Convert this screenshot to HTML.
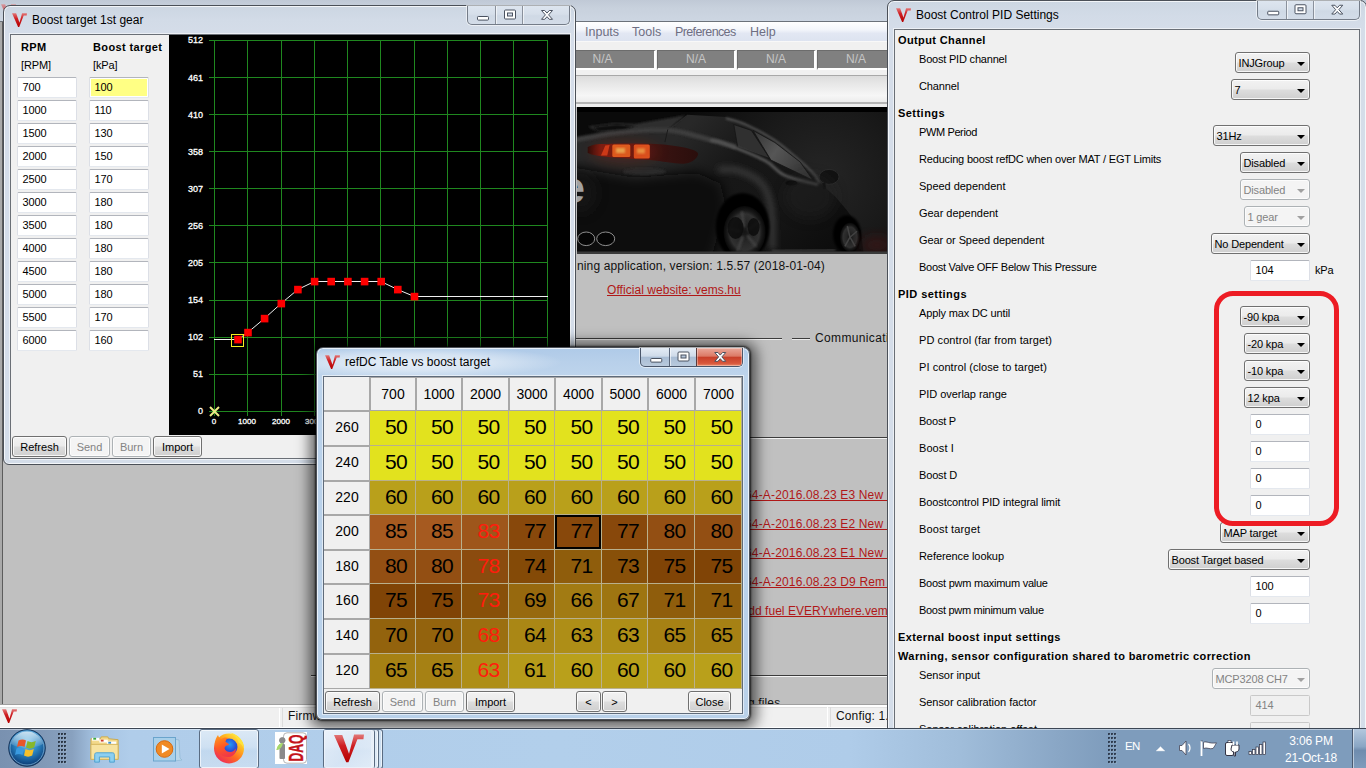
<!DOCTYPE html>
<html><head><meta charset="utf-8"><title>VemsTune</title>
<style>

*{box-sizing:border-box;margin:0;padding:0}
html,body{width:1366px;height:768px;overflow:hidden}
body{position:relative;background:#c0c0c0;font-family:"Liberation Sans",sans-serif;font-size:11px;color:#000;line-height:1}
.a{position:absolute}
.t{position:absolute;white-space:nowrap;line-height:14px;height:14px;letter-spacing:-.15px}
.b{font-weight:bold;letter-spacing:.38px}
/* windows */
.win{position:absolute;border:1px solid #4b5058;border-radius:7px 7px 6px 6px}
.win.in{background:linear-gradient(180deg,#ccd6e2 0px,#d2dbe7 14px,#d5dde9 30px,#d4dde9 100%);box-shadow:inset 0 0 0 1px rgba(255,255,255,.75)}
.win.act{background:linear-gradient(180deg,#afcae8 0px,#b8d0ea 14px,#bfd5ec 30px,#b9d1ea 60px,#b9d1ea 100%);box-shadow:inset 0 0 0 1px rgba(255,255,255,.7),0 0 2px 1px rgba(0,0,0,.7),0 2px 13px 7px rgba(0,0,0,.55)}
.client{position:absolute;background:#f0f0f0;border:1px solid #6a6f76;box-shadow:0 0 0 1px rgba(255,255,255,.55)}
.title{position:absolute;font-size:12px;line-height:16px;white-space:nowrap;color:#000}
.cap{position:absolute;border:1px solid #747c88;border-top:none;border-radius:0 0 5px 5px;box-shadow:0 0 0 1px rgba(255,255,255,.55);overflow:hidden}
.cap i{position:absolute;top:0;bottom:0;display:block}
/* buttons */
.btn{position:absolute;border:1px solid #707070;border-radius:3px;background:linear-gradient(180deg,#f2f2f2 0%,#ebebeb 48%,#dddddd 52%,#cfcfcf 100%);box-shadow:inset 0 0 0 1px rgba(255,255,255,.8);text-align:center;font-size:11px;white-space:nowrap}
.btn.dis{border-color:#adb2b5;background:#f4f4f4;color:#838383;box-shadow:inset 0 0 0 1px #fcfcfc}
.cmb{position:absolute;border:1px solid #707070;border-radius:3px;background:linear-gradient(180deg,#f2f2f2 0%,#ebebeb 48%,#dddddd 52%,#cfcfcf 100%);box-shadow:inset 0 0 0 1px rgba(255,255,255,.8);font-size:11px;white-space:nowrap;height:21px}
.cmb span{position:absolute;left:2.500px;top:3px;line-height:14px;letter-spacing:-.15px}
.cmb:after{content:"";position:absolute;right:4.500px;top:8.500px;border-left:4px solid transparent;border-right:4px solid transparent;border-top:4.500px solid #000;width:0;height:0}
.cmb.dis{border-color:#adb2b5;background:#f4f4f4;color:#838383;box-shadow:inset 0 0 0 1px #fcfcfc}
.cmb.dis:after{border-top-color:#a0a0a0}
.inp{position:absolute;background:#fff;border:1px solid #dcdfe6;border-top-color:#b2b5bc;border-bottom-color:#e4e8ee;border-radius:1.500px;font-size:11px;white-space:nowrap;letter-spacing:-.15px}
.inp span{position:absolute;left:4.500px;top:2px;line-height:14px}
.c{font-size:21px;letter-spacing:-.6px;text-align:center;padding-left:7px;white-space:nowrap}
.inp.dis{background:#f0f0f0;border-color:#c9c9c9;color:#838383}

</style></head>
<body>
<div id="main"><div class="a" style="left:0;top:0;width:1366px;height:22px;background:linear-gradient(180deg,#c0c9d6 0,#c8d1dd 8px,#cdd6e2 21px)"></div><svg class="a" style="left:1px;top:4px;opacity:.6" width="15" height="14" viewBox="0 0 16 15"><defs><linearGradient id="vg" x1="0" y1="0" x2="0" y2="1"><stop offset="0" stop-color="#e27878"/><stop offset=".4" stop-color="#cf2024"/><stop offset="1" stop-color="#b40000"/></linearGradient></defs><path d="M0,0.4 L4.400,0.400 L8,10.400 L10.700,0.150 L16,0.150 L15.700,2.700 L12.500,2.700 L7.700,15 L6.500,15 Z" fill="url(#vg)"/></svg><div class="a" style="left:0;top:21px;width:1366px;height:1px;background:#6c727a"></div><div class="a" style="left:0;top:22px;width:3px;height:706px;background:#a9a9a9;border-right:1px solid #5c5c5c"></div><div class="a" style="left:3px;top:22px;width:1363px;height:20px;background:linear-gradient(180deg,#ffffff 0,#f4f6fb 40%,#e2e7f3 60%,#dde3f0 100%);border-bottom:1px solid #f8f8f8"></div><div class="t" style="left:585px;top:24px;font-size:12.5px;letter-spacing:0px;line-height:16px;height:16px;color:#6e6e82">Inputs</div><div class="t" style="left:632px;top:24px;font-size:12.5px;letter-spacing:0px;line-height:16px;height:16px;color:#6e6e82">Tools</div><div class="t" style="left:675px;top:24px;font-size:12.5px;letter-spacing:-0.62px;line-height:16px;height:16px;color:#6e6e82">Preferences</div><div class="t" style="left:750px;top:24px;font-size:12.5px;letter-spacing:0px;line-height:16px;height:16px;color:#6e6e82">Help</div><div class="a" style="left:3px;top:42px;width:1363px;height:33px;background:#f0f0f0"></div><div class="a" style="left:550px;top:50px;width:106px;height:20px;background:#808080;border-right:2px solid #fff;border-bottom:2px solid #fff;border-top:1px solid #6c6c6c;border-left:1px solid #6c6c6c;color:#c6c6c6;font-size:12px;line-height:17px;text-align:center">N/A</div><div class="a" style="left:657px;top:50px;width:79px;height:20px;background:#808080;border-right:2px solid #fff;border-bottom:2px solid #fff;border-top:1px solid #6c6c6c;border-left:1px solid #6c6c6c;color:#c6c6c6;font-size:12px;line-height:17px;text-align:center">N/A</div><div class="a" style="left:737px;top:50px;width:79px;height:20px;background:#808080;border-right:2px solid #fff;border-bottom:2px solid #fff;border-top:1px solid #6c6c6c;border-left:1px solid #6c6c6c;color:#c6c6c6;font-size:12px;line-height:17px;text-align:center">N/A</div><div class="a" style="left:817px;top:50px;width:79px;height:20px;background:#808080;border-right:2px solid #fff;border-bottom:2px solid #fff;border-top:1px solid #6c6c6c;border-left:1px solid #6c6c6c;color:#c6c6c6;font-size:12px;line-height:17px;text-align:center">N/A</div><div class="a" style="left:3px;top:75px;width:1363px;height:1px;background:#a8a8a8"></div><div class="a" style="left:3px;top:76px;width:1363px;height:26px;background:linear-gradient(180deg,#dcdcdc 0,#e9e9e9 35%,#f6f6f6 75%,#ececec 100%)"></div><div class="a" style="left:3px;top:102px;width:1363px;height:2px;background:#b4b4b4"></div><div class="a" style="left:3px;top:104px;width:1363px;height:3px;background:#ededed"></div><svg class="a" style="left:577px;top:107px" width="310" height="147" viewBox="0 0 310 147"><defs>
<radialGradient id="cbg" gradientUnits="userSpaceOnUse" cx="245" cy="70" r="150"><stop offset="0" stop-color="#252525"/><stop offset="0.45" stop-color="#1a1a1a"/><stop offset="1" stop-color="#0a0a0a"/></radialGradient>
<linearGradient id="cbody" gradientUnits="userSpaceOnUse" x1="120" y1="10" x2="260" y2="146"><stop offset="0" stop-color="#282828"/><stop offset="0.3" stop-color="#171717"/><stop offset="0.6" stop-color="#161616"/><stop offset="1" stop-color="#0c0c0c"/></linearGradient>
<linearGradient id="cwin" gradientUnits="userSpaceOnUse" x1="170" y1="20" x2="225" y2="60"><stop offset="0" stop-color="#2c2c2c"/><stop offset="0.55" stop-color="#565656"/><stop offset="1" stop-color="#3a3a3a"/></linearGradient>
<linearGradient id="ctl" x1="0" y1="0" x2="1" y2="0"><stop offset="0" stop-color="#2a0c0a"/><stop offset="0.12" stop-color="#7a1c10"/><stop offset="0.5" stop-color="#5a1610"/><stop offset="0.58" stop-color="#3c1412"/><stop offset="1" stop-color="#2a0e0c"/></linearGradient>
<radialGradient id="cwh" cx="0.5" cy="0.5" r="0.5"><stop offset="0" stop-color="#141414"/><stop offset="0.35" stop-color="#262626"/><stop offset="0.7" stop-color="#303030"/><stop offset="0.82" stop-color="#1a1a1a"/><stop offset="1" stop-color="#080808"/></radialGradient>
<filter id="b1" x="-20%" y="-20%" width="140%" height="140%"><feGaussianBlur stdDeviation="1.2"/></filter>
<filter id="b2" x="-30%" y="-30%" width="160%" height="160%"><feGaussianBlur stdDeviation="3"/></filter>
<filter id="b3" x="-50%" y="-50%" width="200%" height="200%"><feGaussianBlur stdDeviation="6"/></filter>
</defs><rect width="310" height="147" fill="url(#cbg)"/><path d="M-1.0,33.2 L38.1,25.3 L90.8,22.4 L110.3,7.8 L149.0,10.1 L168.5,16.6 L197.8,33.2 L223.2,53.7 L236.9,66.4 L242.8,76.1 L258.4,89.8 L270.1,103.5 L283.8,123.0 L286.7,146.4 L0,147 Z" fill="url(#cbody)"/><path d="M10.7,19.5 L38.1,16.0 L57.6,17.1 L108.4,8.2 L92.8,21.4 L57.6,23.4 L22.4,25.3 Z" fill="#2d2d2d" filter="url(#b1)"/><path d="M16.6,19.9 L40.0,17.5 L57.6,19.5 L47.8,23.0 L20.5,24.4 Z" fill="#0c0c0c" filter="url(#b1)"/><path d="M-1.0,32.8 C5.5,31.6 23.1,27.6 38.1,25.9 C53.0,24.3 75.2,22.4 88.8,23.0 C102.5,23.6 108.4,26.4 120.1,29.2 C131.8,32.1 152.5,38.2 159.0,40.0" fill="none" stroke="#3c3c3c" stroke-width="5" filter="url(#b1)"/><path d="M90.8,22.4 L87.9,35.1" fill="none" stroke="#1a1a1a" stroke-width="1"/><path d="M-12.7,58.5 L57.6,70.3 L120.1,65.4 L143.5,76.1 L149.4,99.6 L133.8,154.2 L-12.7,154.2 Z" fill="#070707" filter="url(#b3)"/><ellipse cx="67.4" cy="64.4" rx="22" ry="3.500" fill="#2c2c2c" filter="url(#b1)"/><path d="M10.7,40.0 C13.0,39.5 14.0,37.6 24.4,37.1 C34.8,36.5 59.9,36.2 73.2,36.7 C86.6,37.2 96.5,38.4 104.5,40.0 C112.4,41.6 120.4,43.7 121.1,46.4 C121.7,49.2 116.4,55.5 108.4,56.6 C100.4,57.7 87.2,54.3 73.2,53.1 C59.2,51.8 34.8,50.4 24.4,49.2 C14.0,48.0 13.0,46.4 10.7,45.9 Z" fill="url(#ctl)"/><path d="M28.3,38.4 L32.6,38.0 L30.2,48.4 L24.0,48.4 Z" fill="#d8401a"/><rect x="35.3" y="37.5" width="18" height="12.500" rx="1.500" fill="#ee6a22"/><rect x="56.8" y="37.5" width="16" height="14" rx="1.500" fill="#e85a20"/><rect x="39.0" y="41.0" width="9" height="5" fill="#ffc860" filter="url(#b1)"/><rect x="59.9" y="41.4" width="8" height="5" fill="#ffb050" filter="url(#b1)"/><ellipse cx="47.8" cy="44.9" rx="34" ry="11" fill="#a02010" opacity=".25" filter="url(#b3)"/><ellipse cx="4" cy="86" rx="16" ry="20" fill="#1a1a1a" opacity=".5" filter="url(#b3)"/><text x="-17" y="96" font-family="Liberation Sans,sans-serif" font-weight="bold" font-size="45" fill="#a2a2a2">e</text><ellipse cx="9.2" cy="131.8" rx="8.500" ry="6.800" fill="#050505" stroke="#8e8e8e" stroke-width="1"/><ellipse cx="28.7" cy="131.8" rx="9" ry="6.800" fill="#050505" stroke="#8e8e8e" stroke-width="1"/><path d="M149.0,11.3 C152.3,12.3 160.4,13.8 168.5,17.5 C176.7,21.2 188.7,27.4 197.8,33.5 C206.9,39.7 216.7,48.6 223.2,54.2 C229.7,59.9 233.7,63.7 236.9,67.3 C240.1,71.0 241.4,74.7 242.4,76.1" fill="none" stroke="#505050" stroke-width="2.400" filter="url(#b1)"/><path d="M156.8,17.5 L174.4,23.4 L192.9,51.7 L160.7,40.0 Z" fill="#303030" stroke="#151515" stroke-width=".8"/><path d="M176.0,23.4 L197.8,35.5 L223.2,55.0 L235.9,73.2 L193.9,53.1 Z" fill="url(#cwin)" stroke="#151515" stroke-width=".8"/><path d="M133.4,33.2 C136.0,33.8 139.9,33.6 149.0,37.1 C158.1,40.5 178.3,48.5 188.1,53.7 C197.8,58.9 198.8,64.3 207.6,68.3 C216.4,72.3 235.3,76.1 240.8,77.7" fill="none" stroke="#525252" stroke-width="3" filter="url(#b1)"/><ellipse cx="252.1" cy="69.9" rx="10" ry="7.500" fill="#121212" stroke="#2c2c2c" stroke-width="1"/><path d="M246.7,76.1 L247.6,82.0" stroke="#0c0c0c" stroke-width="3"/><ellipse cx="214.4" cy="76.1" rx="6" ry="2.500" fill="#0a0a0a"/><ellipse cx="233.0" cy="89.8" rx="26" ry="22" fill="#222222" opacity=".5" filter="url(#b3)"/><path d="M141.2,62.5 C144.4,62.6 153.6,61.2 160.7,63.4 C167.9,65.7 178.6,70.1 184.2,76.1 C189.7,82.1 192.0,88.5 193.9,99.6 C195.9,110.6 195.5,135.4 195.9,142.5" fill="none" stroke="#404040" stroke-width="5" filter="url(#b2)"/><ellipse cx="165.6" cy="120.0" rx="27" ry="34" fill="#050505" filter="url(#b1)"/><ellipse cx="167.6" cy="125.0" rx="21" ry="26" fill="url(#cwh)"/><g stroke="#424242" stroke-width="2.500" filter="url(#b1)"><line x1="166.9" y1="120.1" x2="164.8" y2="104.3"/><line x1="171.1" y1="122.7" x2="181.7" y2="115.1"/><line x1="170.4" y1="128.5" x2="179.1" y2="139.6"/><line x1="165.8" y1="129.5" x2="160.5" y2="143.9"/><line x1="163.6" y1="124.3" x2="151.7" y2="122.1"/></g><ellipse cx="158.6" cy="121.0" rx="8" ry="11" fill="#0c0c0c" opacity=".85"/><ellipse cx="176.6" cy="120.0" rx="6" ry="9" fill="#0c0c0c" opacity=".85"/><ellipse cx="270.0" cy="127.2" rx="14" ry="19" fill="#060606" filter="url(#b1)"/><ellipse cx="273.0" cy="130.2" rx="10" ry="14.500" fill="url(#cwh)"/><g stroke="#444" stroke-width="1.500"><line x1="273.0" y1="130.2" x2="270.3" y2="119.0"/><line x1="273.0" y1="130.2" x2="280.0" y2="124.2"/><line x1="273.0" y1="130.2" x2="278.2" y2="139.4"/><line x1="273.0" y1="130.2" x2="267.9" y2="139.4"/></g><ellipse cx="300" cy="138" rx="16" ry="9" fill="#4a1616" opacity=".55" filter="url(#b3)"/><path d="M194.9,144.1 L258.4,142.9" stroke="#3e3e3e" stroke-width="2" filter="url(#b1)"/><rect width="310" height="5" fill="#000"/><rect y="144.500" width="310" height="2.500" fill="#3a3a3a"/></svg><div class="t" style="left:577px;top:258px;font-size:12px;letter-spacing:.14px;line-height:16px;height:16px;color:#111">ning application, version: 1.5.57 (2018-01-04)</div><div class="t" style="left:607px;top:282px;font-size:12px;letter-spacing:.05px;line-height:16px;height:16px;color:#b01818;text-decoration:underline">Official website: vems.hu</div><div class="a" style="left:560px;top:338px;width:222px;height:1px;background:#3c3c3c"></div><div class="a" style="left:560px;top:339px;width:222px;height:1px;background:#ececec"></div><div class="a" style="left:792px;top:338px;width:18px;height:1px;background:#3c3c3c"></div><div class="a" style="left:792px;top:339px;width:18px;height:1px;background:#ececec"></div><div class="t" style="left:815px;top:330px;font-size:12px;letter-spacing:.36px;line-height:16px;height:16px;color:#111">Communication</div><div class="a" style="left:311px;top:437px;width:580px;height:1px;background:#3c3c3c"></div><div class="a" style="left:311px;top:438px;width:580px;height:1px;background:#f4f4f4"></div><div class="t" style="left:745px;top:487px;font-size:12px;letter-spacing:0.16px;line-height:16px;height:16px;color:#b01818;text-decoration:underline">64-A-2016.08.23 E3 New&nbsp;&nbsp;&nbsp;&nbsp;</div><div class="t" style="left:745px;top:516px;font-size:12px;letter-spacing:0.16px;line-height:16px;height:16px;color:#b01818;text-decoration:underline">64-A-2016.08.23 E2 New&nbsp;&nbsp;&nbsp;&nbsp;</div><div class="t" style="left:745px;top:545px;font-size:12px;letter-spacing:0.16px;line-height:16px;height:16px;color:#b01818;text-decoration:underline">64-A-2016.08.23 E1 New&nbsp;&nbsp;&nbsp;&nbsp;</div><div class="t" style="left:745px;top:574px;font-size:12px;letter-spacing:0.16px;line-height:16px;height:16px;color:#b01818;text-decoration:underline">64-A-2016.08.23 D9 Rem&nbsp;&nbsp;</div><div class="t" style="left:748.2px;top:603px;font-size:12px;letter-spacing:0.05px;line-height:16px;height:16px;color:#b01818;text-decoration:underline">dd fuel EVERYwhere.vem&nbsp;&nbsp;</div><div class="a" style="left:311px;top:675px;width:580px;height:1px;background:#3c3c3c"></div><div class="a" style="left:311px;top:676px;width:580px;height:1px;background:#f4f4f4"></div><div class="t" style="left:748px;top:695px;font-size:12px;letter-spacing:.14px;line-height:16px;height:16px;color:#111">g files</div><div class="a" style="left:0;top:704px;width:1366px;height:1px;background:#a0a0a0"></div><div class="a" style="left:0;top:705px;width:1366px;height:23px;background:#f0f0f0;border-top:2px solid #fff;border-bottom:1px solid #fff"></div><svg class="a" style="left:2px;top:709px;" width="15" height="14" viewBox="0 0 16 15"><defs><linearGradient id="vg" x1="0" y1="0" x2="0" y2="1"><stop offset="0" stop-color="#e27878"/><stop offset=".4" stop-color="#cf2024"/><stop offset="1" stop-color="#b40000"/></linearGradient></defs><path d="M0,0.4 L4.400,0.400 L8,10.400 L10.700,0.150 L16,0.150 L15.700,2.700 L12.500,2.700 L7.700,15 L6.500,15 Z" fill="url(#vg)"/></svg><div class="a" style="left:279px;top:707px;width:1px;height:20px;background:#fff"></div><div class="a" style="left:282px;top:707px;width:1px;height:20px;background:#dcdcdc"></div><div class="a" style="left:0;top:707px;width:1366px;height:1px;background:#e2e2e2"></div><div class="t" style="left:288px;top:708px;font-size:12px;letter-spacing:.14px;line-height:16px;height:16px;color:#111">Firmware</div><div class="a" style="left:827px;top:707px;width:1px;height:20px;background:#fff"></div><div class="a" style="left:830px;top:707px;width:1px;height:20px;background:#dcdcdc"></div><div class="t" style="left:836px;top:708px;font-size:12px;letter-spacing:.14px;line-height:16px;height:16px;color:#111">Config: 1.</div></div><div id="boost"><div class="win in" style="left:3px;top:5px;width:573px;height:460px"></div><svg class="a" style="left:12px;top:13px;" width="15" height="14" viewBox="0 0 16 15"><defs><linearGradient id="vg" x1="0" y1="0" x2="0" y2="1"><stop offset="0" stop-color="#e27878"/><stop offset=".4" stop-color="#cf2024"/><stop offset="1" stop-color="#b40000"/></linearGradient></defs><path d="M0,0.4 L4.400,0.400 L8,10.400 L10.700,0.150 L16,0.150 L15.700,2.700 L12.500,2.700 L7.700,15 L6.500,15 Z" fill="url(#vg)"/></svg><div class="title" style="left:32px;top:12px">Boost target 1st gear</div><div class="cap" style="left:467px;top:6px;width:103px;height:19px;background:linear-gradient(180deg,#dde5ef 0,#d6dfea 45%,#cfd9e5 55%,#d3dce8 100%)"><i style="left:27px;width:1px;background:#8a919c;box-shadow:1px 0 0 rgba(255,255,255,.6)"></i><i style="left:54px;width:1px;background:#8a919c;box-shadow:1px 0 0 rgba(255,255,255,.6)"></i><svg class="a" style="left:0;top:0" width="103" height="19"><rect x="9.5" y="10.5" width="11" height="3.600" rx=".8" fill="#fff" stroke="#4a5260" stroke-width="1"/><rect x="36.5" y="4" width="11" height="9" rx="1" fill="#fff" stroke="#4a5260" stroke-width="1"/><rect x="39.5" y="7" width="5" height="3" fill="#d3dce8" stroke="#4a5260" stroke-width="1"/><path d="M73.5,4.5 l3.200,0 l2.300,2.600 l2.300,-2.600 l3.200,0 l-3.900,4.400 l3.900,4.400 l-3.200,0 l-2.300,-2.600 l-2.300,2.600 l-3.200,0 l3.900,-4.400 Z" fill="#fff" stroke="#4a5260" stroke-width="1" stroke-linejoin="round"/></svg></div><div class="client" style="left:10px;top:34px;width:560px;height:425px"></div><div class="t b" style="left:21px;top:40px">RPM</div><div class="t b" style="left:93px;top:40px">Boost target</div><div class="t" style="left:21px;top:58px">[RPM]</div><div class="t" style="left:93px;top:58px">[kPa]</div><div class="inp" style="left:17px;top:77px;width:60px;height:21px"><span>700</span></div><div class="inp" style="left:89px;top:77px;width:60px;height:21px;background:#ffff84;box-shadow:inset 0 0 0 1px #fff"><span>100</span></div><div class="inp" style="left:17px;top:100px;width:60px;height:21px"><span>1000</span></div><div class="inp" style="left:89px;top:100px;width:60px;height:21px"><span>110</span></div><div class="inp" style="left:17px;top:123px;width:60px;height:21px"><span>1500</span></div><div class="inp" style="left:89px;top:123px;width:60px;height:21px"><span>130</span></div><div class="inp" style="left:17px;top:146px;width:60px;height:21px"><span>2000</span></div><div class="inp" style="left:89px;top:146px;width:60px;height:21px"><span>150</span></div><div class="inp" style="left:17px;top:169px;width:60px;height:21px"><span>2500</span></div><div class="inp" style="left:89px;top:169px;width:60px;height:21px"><span>170</span></div><div class="inp" style="left:17px;top:192px;width:60px;height:21px"><span>3000</span></div><div class="inp" style="left:89px;top:192px;width:60px;height:21px"><span>180</span></div><div class="inp" style="left:17px;top:215px;width:60px;height:21px"><span>3500</span></div><div class="inp" style="left:89px;top:215px;width:60px;height:21px"><span>180</span></div><div class="inp" style="left:17px;top:238px;width:60px;height:21px"><span>4000</span></div><div class="inp" style="left:89px;top:238px;width:60px;height:21px"><span>180</span></div><div class="inp" style="left:17px;top:261px;width:60px;height:21px"><span>4500</span></div><div class="inp" style="left:89px;top:261px;width:60px;height:21px"><span>180</span></div><div class="inp" style="left:17px;top:284px;width:60px;height:21px"><span>5000</span></div><div class="inp" style="left:89px;top:284px;width:60px;height:21px"><span>180</span></div><div class="inp" style="left:17px;top:307px;width:60px;height:21px"><span>5500</span></div><div class="inp" style="left:89px;top:307px;width:60px;height:21px"><span>170</span></div><div class="inp" style="left:17px;top:330px;width:60px;height:21px"><span>6000</span></div><div class="inp" style="left:89px;top:330px;width:60px;height:21px"><span>160</span></div><svg class="a" style="left:169px;top:35px" width="401" height="400" viewBox="169 35 401 400" shape-rendering="crispEdges"><rect x="169" y="35" width="401" height="400" fill="#000"/><path d="M214.5,40 V416 M247.5,40 V416 M281.5,40 V416 M314.5,40 V416 M347.5,40 V416 M380.5,40 V416 M414.5,40 V416 M447.5,40 V416 M480.5,40 V416 M513.5,40 V416 M547.5,40 V416 M209,411.5 H548 M209,374.5 H548 M209,337.5 H548 M209,300.5 H548 M209,262.5 H548 M209,225.5 H548 M209,188.5 H548 M209,151.5 H548 M209,114.5 H548 M209,77.5 H548 M209,40.5 H548 " stroke="#1f871f" stroke-width="1" fill="none"/><polyline shape-rendering="auto" points="214.0,339.5 237.8,339.5 247.8,332.5 264.4,318.5 281.1,303.5 297.8,289.5 314.4,281.5 331.0,281.5 347.7,281.5 364.4,281.5 381.0,281.5 397.6,289.5 414.3,296.5 548.0,296.5" fill="none" stroke="#f0f0f0" stroke-width="1"/><rect shape-rendering="auto" x="234.2" y="335.8" width="7.600" height="7.600" fill="#ff0000"/><rect shape-rendering="auto" x="244.2" y="328.8" width="7.600" height="7.600" fill="#ff0000"/><rect shape-rendering="auto" x="260.8" y="314.8" width="7.600" height="7.600" fill="#ff0000"/><rect shape-rendering="auto" x="277.5" y="299.8" width="7.600" height="7.600" fill="#ff0000"/><rect shape-rendering="auto" x="294.1" y="285.8" width="7.600" height="7.600" fill="#ff0000"/><rect shape-rendering="auto" x="310.8" y="277.8" width="7.600" height="7.600" fill="#ff0000"/><rect shape-rendering="auto" x="327.4" y="277.8" width="7.600" height="7.600" fill="#ff0000"/><rect shape-rendering="auto" x="344.1" y="277.8" width="7.600" height="7.600" fill="#ff0000"/><rect shape-rendering="auto" x="360.8" y="277.8" width="7.600" height="7.600" fill="#ff0000"/><rect shape-rendering="auto" x="377.4" y="277.8" width="7.600" height="7.600" fill="#ff0000"/><rect shape-rendering="auto" x="394.0" y="285.8" width="7.600" height="7.600" fill="#ff0000"/><rect shape-rendering="auto" x="410.7" y="292.8" width="7.600" height="7.600" fill="#ff0000"/><rect x="231.5" y="334.5" width="12" height="12" fill="none" stroke="#f4f020" stroke-width="1"/><path shape-rendering="auto" d="M210,407 l9,9 m0,-9 l-9,9" stroke="#ecec84" stroke-width="2"/></svg><div class="t" style="left:170px;width:33px;text-align:right;top:33px;color:#fff;font-size:9px;letter-spacing:0;-webkit-text-stroke:.3px #fff">512</div><div class="t" style="left:170px;width:33px;text-align:right;top:71px;color:#fff;font-size:9px;letter-spacing:0;-webkit-text-stroke:.3px #fff">461</div><div class="t" style="left:170px;width:33px;text-align:right;top:108px;color:#fff;font-size:9px;letter-spacing:0;-webkit-text-stroke:.3px #fff">410</div><div class="t" style="left:170px;width:33px;text-align:right;top:145px;color:#fff;font-size:9px;letter-spacing:0;-webkit-text-stroke:.3px #fff">358</div><div class="t" style="left:170px;width:33px;text-align:right;top:182px;color:#fff;font-size:9px;letter-spacing:0;-webkit-text-stroke:.3px #fff">307</div><div class="t" style="left:170px;width:33px;text-align:right;top:219px;color:#fff;font-size:9px;letter-spacing:0;-webkit-text-stroke:.3px #fff">256</div><div class="t" style="left:170px;width:33px;text-align:right;top:256px;color:#fff;font-size:9px;letter-spacing:0;-webkit-text-stroke:.3px #fff">205</div><div class="t" style="left:170px;width:33px;text-align:right;top:293px;color:#fff;font-size:9px;letter-spacing:0;-webkit-text-stroke:.3px #fff">154</div><div class="t" style="left:170px;width:33px;text-align:right;top:330px;color:#fff;font-size:9px;letter-spacing:0;-webkit-text-stroke:.3px #fff">102</div><div class="t" style="left:170px;width:33px;text-align:right;top:367px;color:#fff;font-size:9px;letter-spacing:0;-webkit-text-stroke:.3px #fff">51</div><div class="t" style="left:170px;width:33px;text-align:right;top:404px;color:#fff;font-size:9px;letter-spacing:0;-webkit-text-stroke:.3px #fff">0</div><div class="t" style="left:194px;width:40px;text-align:center;top:415px;color:#fff;font-size:8px;letter-spacing:0;-webkit-text-stroke:.3px #fff">0</div><div class="t" style="left:227px;width:40px;text-align:center;top:415px;color:#fff;font-size:8px;letter-spacing:0;-webkit-text-stroke:.3px #fff">1000</div><div class="t" style="left:261px;width:40px;text-align:center;top:415px;color:#fff;font-size:8px;letter-spacing:0;-webkit-text-stroke:.3px #fff">2000</div><div class="t" style="left:294px;width:40px;text-align:center;top:415px;color:#fff;font-size:8px;letter-spacing:0;-webkit-text-stroke:.3px #fff">3000</div><div class="btn" style="left:12px;top:436px;width:55px;height:21px;line-height:20px">Refresh</div><div class="btn dis" style="left:69px;top:436px;width:41px;height:21px;line-height:20px">Send</div><div class="btn dis" style="left:112px;top:436px;width:39px;height:21px;line-height:20px">Burn</div><div class="btn" style="left:153px;top:436px;width:49px;height:21px;line-height:20px">Import</div></div><div id="pid"><div class="win in" style="left:887px;top:0px;width:480px;height:790px"></div><svg class="a" style="left:896px;top:8px;" width="15" height="14" viewBox="0 0 16 15"><defs><linearGradient id="vg" x1="0" y1="0" x2="0" y2="1"><stop offset="0" stop-color="#e27878"/><stop offset=".4" stop-color="#cf2024"/><stop offset="1" stop-color="#b40000"/></linearGradient></defs><path d="M0,0.4 L4.400,0.400 L8,10.400 L10.700,0.150 L16,0.150 L15.700,2.700 L12.500,2.700 L7.700,15 L6.500,15 Z" fill="url(#vg)"/></svg><div class="title" style="left:916px;top:7px">Boost Control PID Settings</div><div class="cap" style="left:1257px;top:1px;width:103px;height:18.5px;background:linear-gradient(180deg,#dde5ef 0,#d6dfea 45%,#cfd9e5 55%,#d3dce8 100%)"><i style="left:27.5px;width:1px;background:#8a919c;box-shadow:1px 0 0 rgba(255,255,255,.6)"></i><i style="left:54.5px;width:1px;background:#8a919c;box-shadow:1px 0 0 rgba(255,255,255,.6)"></i><svg class="a" style="left:0;top:0" width="103" height="18.5"><rect x="9.75" y="10.25" width="11" height="3.600" rx=".8" fill="#fff" stroke="#4a5260" stroke-width="1"/><rect x="37" y="3.75" width="11" height="9" rx="1" fill="#fff" stroke="#4a5260" stroke-width="1"/><rect x="40" y="6.75" width="5" height="3" fill="#d3dce8" stroke="#4a5260" stroke-width="1"/><path d="M73.75,4.25 l3.200,0 l2.300,2.600 l2.300,-2.600 l3.200,0 l-3.900,4.400 l3.900,4.400 l-3.200,0 l-2.300,-2.600 l-2.300,2.600 l-3.200,0 l3.900,-4.400 Z" fill="#fff" stroke="#4a5260" stroke-width="1" stroke-linejoin="round"/></svg></div><div class="client" style="left:894px;top:29px;width:466px;height:720px"></div><div class="t b" style="left:898px;top:33px;letter-spacing:0.38px">Output Channel</div><div class="t" style="left:919px;top:52px;letter-spacing:-0.2px">Boost PID channel</div><div class="cmb" style="left:1235px;top:52px;width:75px"><span>INJGroup</span></div><div class="t" style="left:919px;top:79px;letter-spacing:-0.14px">Channel</div><div class="cmb" style="left:1231px;top:79px;width:79px"><span>7</span></div><div class="t b" style="left:898px;top:106px;letter-spacing:0.46px">Settings</div><div class="t" style="left:919px;top:125px;letter-spacing:-0.38px">PWM Period</div><div class="cmb" style="left:1213px;top:125px;width:97px"><span>31Hz</span></div><div class="t" style="left:919px;top:152px;letter-spacing:-0.18px">Reducing boost refDC when over MAT / EGT Limits</div><div class="cmb" style="left:1240px;top:152px;width:70px"><span>Disabled</span></div><div class="t" style="left:919px;top:179px;letter-spacing:-0.03px">Speed dependent</div><div class="cmb dis" style="left:1240px;top:179px;width:70px"><span>Disabled</span></div><div class="t" style="left:919px;top:206px;letter-spacing:-0.03px">Gear dependent</div><div class="cmb dis" style="left:1244px;top:206px;width:66px"><span>1 gear</span></div><div class="t" style="left:919px;top:233px;letter-spacing:-0.09px">Gear or Speed dependent</div><div class="cmb" style="left:1211px;top:233px;width:99px"><span>No Dependent</span></div><div class="t" style="left:919px;top:260px;letter-spacing:-0.26px">Boost Valve OFF Below This Pressure</div><div class="inp" style="left:1250px;top:260px;width:60px;height:21px"><span>104</span></div><div class="t" style="left:1315px;top:263px">kPa</div><div class="t b" style="left:898px;top:287px;letter-spacing:0.45px">PID settings</div><div class="t" style="left:919px;top:306px;letter-spacing:-0.14px">Apply max DC until</div><div class="cmb" style="left:1240px;top:306px;width:70px"><span>-90 kpa</span></div><div class="t" style="left:919px;top:333px;letter-spacing:0.08px">PD control (far from target)</div><div class="cmb" style="left:1244px;top:333px;width:66px"><span>-20 kpa</span></div><div class="t" style="left:919px;top:360px;letter-spacing:0.07px">PI control (close to target)</div><div class="cmb" style="left:1244px;top:360px;width:66px"><span>-10 kpa</span></div><div class="t" style="left:919px;top:387px;letter-spacing:-0.05px">PID overlap range</div><div class="cmb" style="left:1244px;top:387px;width:66px"><span>12 kpa</span></div><div class="t" style="left:919px;top:414px;letter-spacing:-0.23px">Boost P</div><div class="inp" style="left:1250px;top:414px;width:60px;height:21px"><span>0</span></div><div class="t" style="left:919px;top:441px;letter-spacing:0.08px">Boost I</div><div class="inp" style="left:1250px;top:441px;width:60px;height:21px"><span>0</span></div><div class="t" style="left:919px;top:468px;letter-spacing:-0.16px">Boost D</div><div class="inp" style="left:1250px;top:468px;width:60px;height:21px"><span>0</span></div><div class="t" style="left:919px;top:495px;letter-spacing:-0.1px">Boostcontrol PID integral limit</div><div class="inp" style="left:1250px;top:495px;width:60px;height:21px"><span>0</span></div><div class="t" style="left:919px;top:522px;letter-spacing:0.15px">Boost target</div><div class="cmb" style="left:1220px;top:522px;width:90px"><span>MAP target</span></div><div class="t" style="left:919px;top:549px;letter-spacing:-0.08px">Reference lookup</div><div class="cmb" style="left:1168px;top:549px;width:142px"><span>Boost Target based</span></div><div class="t" style="left:919px;top:576px;letter-spacing:-0.25px">Boost pwm maximum value</div><div class="inp" style="left:1250px;top:576px;width:60px;height:21px"><span>100</span></div><div class="t" style="left:919px;top:603px;letter-spacing:-0.29px">Boost pwm minimum value</div><div class="inp" style="left:1250px;top:603px;width:60px;height:21px"><span>0</span></div><div class="t b" style="left:898px;top:630px;letter-spacing:0.39px">External boost input settings</div><div class="t b" style="left:898px;top:649px;letter-spacing:0.4px">Warning, sensor configuration shared to barometric correction</div><div class="t" style="left:919px;top:668px;letter-spacing:-0.06px">Sensor input</div><div class="cmb dis" style="left:1212px;top:668px;width:98px"><span>MCP3208 CH7</span></div><div class="t" style="left:919px;top:695px;letter-spacing:-0.05px">Sensor calibration factor</div><div class="inp dis" style="left:1250px;top:695px;width:60px;height:21px"><span>414</span></div><div class="t" style="left:919px;top:722px;letter-spacing:0.01px">Sensor calibration offset</div><div class="inp dis" style="left:1250px;top:722px;width:60px;height:21px"><span></span></div><div class="a" style="left:1214px;top:291px;width:125px;height:235px;border:5px solid #ed1c24;border-radius:19px"></div></div><div id="refdc"><div class="win act" style="left:316px;top:347px;width:434px;height:373px"></div><div class="a" style="left:318px;top:349px;width:300px;height:27px;border-radius:6px 0 0 0;background:radial-gradient(ellipse 150px 16px at 95px 13px,rgba(255,255,255,.62) 0,rgba(255,255,255,.45) 50%,rgba(255,255,255,0) 100%)"></div><svg class="a" style="left:325px;top:355px;" width="15" height="14" viewBox="0 0 16 15"><defs><linearGradient id="vg" x1="0" y1="0" x2="0" y2="1"><stop offset="0" stop-color="#e27878"/><stop offset=".4" stop-color="#cf2024"/><stop offset="1" stop-color="#b40000"/></linearGradient></defs><path d="M0,0.4 L4.400,0.400 L8,10.400 L10.700,0.150 L16,0.150 L15.700,2.700 L12.500,2.700 L7.700,15 L6.500,15 Z" fill="url(#vg)"/></svg><div class="title" style="left:345px;top:354px">refDC Table vs boost target</div><div class="cap" style="left:640px;top:348px;width:103px;height:19px;background:linear-gradient(180deg,#e4ecf5 0,#cfdbe9 45%,#a9bdd4 52%,#b9cadd 100%);border-color:#4a566a"><i style="left:27.5px;width:1px;background:#5a667a;box-shadow:1px 0 0 rgba(255,255,255,.6)"></i><i style="left:54.5px;right:0;background:linear-gradient(180deg,#eaa89a 0,#dc7a66 45%,#c8402a 52%,#d8573c 85%,#e88a6a 100%);border-left:1px solid #5a3a3a;box-shadow:inset 0 0 0 1px rgba(255,255,255,.35)"></i><svg class="a" style="left:0;top:0" width="103" height="19"><rect x="9.75" y="10.5" width="11" height="3.600" rx=".8" fill="#fff" stroke="#4a5260" stroke-width="1"/><rect x="37" y="4" width="11" height="9" rx="1" fill="#fff" stroke="#4a5260" stroke-width="1"/><rect x="40" y="7" width="5" height="3" fill="#b6c6da" stroke="#4a5260" stroke-width="1"/><path d="M73.75,4.5 l3.200,0 l2.300,2.600 l2.300,-2.600 l3.200,0 l-3.900,4.400 l3.900,4.400 l-3.200,0 l-2.300,-2.600 l-2.300,2.600 l-3.200,0 l3.900,-4.400 Z" fill="#fff" stroke="#4a5260" stroke-width="1" stroke-linejoin="round"/></svg></div><div class="client" style="left:323px;top:376px;width:420px;height:338px;border-color:#5f6b7a"></div><div class="a" style="left:324px;top:377px;width:418px;height:34px;background:#a8a8a8"></div><div class="a" style="left:324px;top:377px;width:46px;height:312px;background:#a8a8a8"></div><div class="a" style="left:324px;top:377px;width:45px;height:33px;background:#f0f0f0"></div><div class="a" style="left:371px;top:378px;width:44px;height:32px;background:#f0f0f0;font-size:14px;line-height:32px;text-align:center">700</div><div class="a" style="left:417px;top:378px;width:44px;height:32px;background:#f0f0f0;font-size:14px;line-height:32px;text-align:center">1000</div><div class="a" style="left:463px;top:378px;width:45px;height:32px;background:#f0f0f0;font-size:14px;line-height:32px;text-align:center">2000</div><div class="a" style="left:510px;top:378px;width:44px;height:32px;background:#f0f0f0;font-size:14px;line-height:32px;text-align:center">3000</div><div class="a" style="left:556px;top:378px;width:45px;height:32px;background:#f0f0f0;font-size:14px;line-height:32px;text-align:center">4000</div><div class="a" style="left:603px;top:378px;width:44px;height:32px;background:#f0f0f0;font-size:14px;line-height:32px;text-align:center">5000</div><div class="a" style="left:649px;top:378px;width:45px;height:32px;background:#f0f0f0;font-size:14px;line-height:32px;text-align:center">6000</div><div class="a" style="left:696px;top:378px;width:45px;height:32px;background:#f0f0f0;font-size:14px;line-height:32px;text-align:center">7000</div><div class="a" style="left:324px;top:412px;width:45px;height:33px;background:#f0f0f0;font-size:14px;line-height:31px;text-align:center;padding-left:1px">260</div><div class="a" style="left:324px;top:447px;width:45px;height:33px;background:#f0f0f0;font-size:14px;line-height:31px;text-align:center;padding-left:1px">240</div><div class="a" style="left:324px;top:482px;width:45px;height:32px;background:#f0f0f0;font-size:14px;line-height:30px;text-align:center;padding-left:1px">220</div><div class="a" style="left:324px;top:516px;width:45px;height:33px;background:#f0f0f0;font-size:14px;line-height:31px;text-align:center;padding-left:1px">200</div><div class="a" style="left:324px;top:551px;width:45px;height:32px;background:#f0f0f0;font-size:14px;line-height:30px;text-align:center;padding-left:1px">180</div><div class="a" style="left:324px;top:585px;width:45px;height:33px;background:#f0f0f0;font-size:14px;line-height:31px;text-align:center;padding-left:1px">160</div><div class="a" style="left:324px;top:620px;width:45px;height:33px;background:#f0f0f0;font-size:14px;line-height:31px;text-align:center;padding-left:1px">140</div><div class="a" style="left:324px;top:655px;width:45px;height:33px;background:#f0f0f0;font-size:14px;line-height:31px;text-align:center;padding-left:1px">120</div><div class="a" style="left:370px;top:411px;width:372px;height:278px;background:#b9b08c"></div><div class="a c" style="left:370px;top:411px;width:45px;height:34px;background:#e2e21e;line-height:32px">50</div><div class="a c" style="left:416px;top:411px;width:45px;height:34px;background:#e2e21e;line-height:32px">50</div><div class="a c" style="left:462px;top:411px;width:46px;height:34px;background:#e2e21e;line-height:32px">50</div><div class="a c" style="left:509px;top:411px;width:45px;height:34px;background:#e2e21e;line-height:32px">50</div><div class="a c" style="left:555px;top:411px;width:46px;height:34px;background:#e2e21e;line-height:32px">50</div><div class="a c" style="left:602px;top:411px;width:45px;height:34px;background:#e2e21e;line-height:32px">50</div><div class="a c" style="left:648px;top:411px;width:46px;height:34px;background:#e2e21e;line-height:32px">50</div><div class="a c" style="left:695px;top:411px;width:46px;height:34px;background:#e2e21e;line-height:32px">50</div><div class="a c" style="left:370px;top:446px;width:45px;height:34px;background:#e2e21e;line-height:32px">50</div><div class="a c" style="left:416px;top:446px;width:45px;height:34px;background:#e2e21e;line-height:32px">50</div><div class="a c" style="left:462px;top:446px;width:46px;height:34px;background:#e2e21e;line-height:32px">50</div><div class="a c" style="left:509px;top:446px;width:45px;height:34px;background:#e2e21e;line-height:32px">50</div><div class="a c" style="left:555px;top:446px;width:46px;height:34px;background:#e2e21e;line-height:32px">50</div><div class="a c" style="left:602px;top:446px;width:45px;height:34px;background:#e2e21e;line-height:32px">50</div><div class="a c" style="left:648px;top:446px;width:46px;height:34px;background:#e2e21e;line-height:32px">50</div><div class="a c" style="left:695px;top:446px;width:46px;height:34px;background:#e2e21e;line-height:32px">50</div><div class="a c" style="left:370px;top:481px;width:45px;height:33px;background:#b9a01b;line-height:31px">60</div><div class="a c" style="left:416px;top:481px;width:45px;height:33px;background:#b9a01b;line-height:31px">60</div><div class="a c" style="left:462px;top:481px;width:46px;height:33px;background:#b9a01b;line-height:31px">60</div><div class="a c" style="left:509px;top:481px;width:45px;height:33px;background:#b9a01b;line-height:31px">60</div><div class="a c" style="left:555px;top:481px;width:46px;height:33px;background:#b9a01b;line-height:31px">60</div><div class="a c" style="left:602px;top:481px;width:45px;height:33px;background:#b9a01b;line-height:31px">60</div><div class="a c" style="left:648px;top:481px;width:46px;height:33px;background:#b9a01b;line-height:31px">60</div><div class="a c" style="left:695px;top:481px;width:46px;height:33px;background:#b9a01b;line-height:31px">60</div><div class="a c" style="left:370px;top:515px;width:45px;height:34px;background:#a65a20;line-height:32px">85</div><div class="a c" style="left:416px;top:515px;width:45px;height:34px;background:#a65a20;line-height:32px">85</div><div class="a c" style="left:462px;top:515px;width:46px;height:34px;background:#9e561b;line-height:32px;color:#ff1c0c">83</div><div class="a c" style="left:509px;top:515px;width:45px;height:34px;background:#88480b;line-height:32px">77</div><div class="a c" style="left:555px;top:515px;width:46px;height:34px;background:#88480b;line-height:32px;box-shadow:0 0 0 2px #000 inset">77</div><div class="a c" style="left:602px;top:515px;width:45px;height:34px;background:#88480b;line-height:32px">77</div><div class="a c" style="left:648px;top:515px;width:46px;height:34px;background:#934f13;line-height:32px">80</div><div class="a c" style="left:695px;top:515px;width:46px;height:34px;background:#934f13;line-height:32px">80</div><div class="a c" style="left:370px;top:550px;width:45px;height:33px;background:#934f13;line-height:31px">80</div><div class="a c" style="left:416px;top:550px;width:45px;height:33px;background:#934f13;line-height:31px">80</div><div class="a c" style="left:462px;top:550px;width:46px;height:33px;background:#8b4b0e;line-height:31px;color:#ff1c0c">78</div><div class="a c" style="left:509px;top:550px;width:45px;height:33px;background:#844a07;line-height:31px">74</div><div class="a c" style="left:555px;top:550px;width:46px;height:33px;background:#8f5d0c;line-height:31px">71</div><div class="a c" style="left:602px;top:550px;width:45px;height:33px;background:#885009;line-height:31px">73</div><div class="a c" style="left:648px;top:550px;width:46px;height:33px;background:#804406;line-height:31px">75</div><div class="a c" style="left:695px;top:550px;width:46px;height:33px;background:#804406;line-height:31px">75</div><div class="a c" style="left:370px;top:584px;width:45px;height:34px;background:#804406;line-height:32px">75</div><div class="a c" style="left:416px;top:584px;width:45px;height:34px;background:#804406;line-height:32px">75</div><div class="a c" style="left:462px;top:584px;width:46px;height:34px;background:#885009;line-height:32px;color:#ff1c0c">73</div><div class="a c" style="left:509px;top:584px;width:45px;height:34px;background:#97690e;line-height:32px">69</div><div class="a c" style="left:555px;top:584px;width:46px;height:34px;background:#a27b13;line-height:32px">66</div><div class="a c" style="left:602px;top:584px;width:45px;height:34px;background:#9e7511;line-height:32px">67</div><div class="a c" style="left:648px;top:584px;width:46px;height:34px;background:#8f5d0c;line-height:32px">71</div><div class="a c" style="left:695px;top:584px;width:46px;height:34px;background:#8f5d0c;line-height:32px">71</div><div class="a c" style="left:370px;top:619px;width:45px;height:34px;background:#93630d;line-height:32px">70</div><div class="a c" style="left:416px;top:619px;width:45px;height:34px;background:#93630d;line-height:32px">70</div><div class="a c" style="left:462px;top:619px;width:46px;height:34px;background:#9b6f10;line-height:32px;color:#ff1c0c">68</div><div class="a c" style="left:509px;top:619px;width:45px;height:34px;background:#aa8715;line-height:32px">64</div><div class="a c" style="left:555px;top:619px;width:46px;height:34px;background:#ae8e17;line-height:32px">63</div><div class="a c" style="left:602px;top:619px;width:45px;height:34px;background:#ae8e17;line-height:32px">63</div><div class="a c" style="left:648px;top:619px;width:46px;height:34px;background:#a68114;line-height:32px">65</div><div class="a c" style="left:695px;top:619px;width:46px;height:34px;background:#a68114;line-height:32px">65</div><div class="a c" style="left:370px;top:654px;width:45px;height:34px;background:#a68114;line-height:32px">65</div><div class="a c" style="left:416px;top:654px;width:45px;height:34px;background:#a68114;line-height:32px">65</div><div class="a c" style="left:462px;top:654px;width:46px;height:34px;background:#ae8e17;line-height:32px;color:#ff1c0c">63</div><div class="a c" style="left:509px;top:654px;width:45px;height:34px;background:#b59a1a;line-height:32px">61</div><div class="a c" style="left:555px;top:654px;width:46px;height:34px;background:#b9a01b;line-height:32px">60</div><div class="a c" style="left:602px;top:654px;width:45px;height:34px;background:#b9a01b;line-height:32px">60</div><div class="a c" style="left:648px;top:654px;width:46px;height:34px;background:#b9a01b;line-height:32px">60</div><div class="a c" style="left:695px;top:654px;width:46px;height:34px;background:#b9a01b;line-height:32px">60</div><div class="btn" style="left:325px;top:691px;width:55px;height:21px;line-height:20px">Refresh</div><div class="btn dis" style="left:382px;top:691px;width:41px;height:21px;line-height:20px">Send</div><div class="btn dis" style="left:425px;top:691px;width:39px;height:21px;line-height:20px">Burn</div><div class="btn" style="left:466px;top:691px;width:49px;height:21px;line-height:20px">Import</div><div class="btn" style="left:576px;top:691px;width:25px;height:21px;line-height:20px">&lt;</div><div class="btn" style="left:602px;top:691px;width:25px;height:21px;line-height:20px">&gt;</div><div class="btn" style="left:688px;top:691px;width:43px;height:21px;line-height:20px">Close</div></div><div id="taskbar"><div class="a" style="left:0;top:728px;width:1366px;height:40px;background:linear-gradient(90deg,#7991b0 0,#8098b6 40px,#88a1bf 72px,#a5c3e2 96px,#b0cdea 130px,#b2cfeb 560px,#afcce9 850px,#a0bdda 960px,#89a6c5 1060px,#7e9cbc 1110px,#7e9cbc 1366px);border-top:1px solid #3c4654;box-shadow:inset 0 1px 0 rgba(255,255,255,.45)"></div><svg class="a" style="left:7px;top:729px" width="40" height="39" viewBox="0 0 40 39"><defs><radialGradient id="og" cx="0.5" cy="0.35" r="0.7"><stop offset="0" stop-color="#7fc6ea"/><stop offset="0.45" stop-color="#2a86c4"/><stop offset="0.8" stop-color="#124a86"/><stop offset="1" stop-color="#0b2c5a"/></radialGradient>
<linearGradient id="ogl" x1="0" y1="0" x2="0" y2="1"><stop offset="0" stop-color="#ffffff" stop-opacity=".75"/><stop offset="1" stop-color="#ffffff" stop-opacity=".05"/></linearGradient></defs><circle cx="20" cy="19" r="18.3" fill="url(#og)" stroke="#17365c" stroke-width="1"/><circle cx="20" cy="19" r="17" fill="none" stroke="#9fd0ee" stroke-opacity=".6" stroke-width="1"/><path d="M4,15 A16.5,16.5 0 0 1 36,15 C28,20 12,20 4,15 Z" fill="url(#ogl)"/><path d="M11.5,11.5 C14,10 17,10 19,11.5 L17.5,18 C15.5,16.8 12.5,16.8 10,18 Z" fill="#e8562a"/><path d="M20.5,12 C23,13.5 26,13.5 28.8,12 L27.2,18.5 C24.5,20 21.500,20 19,18.5 Z" fill="#86b82c"/><path d="M9.5,19.5 C12,18.300 15,18.300 17,19.500 L15.5,26 C13.500,24.800 10.500,24.800 8,26 Z" fill="#3a9ae0"/><path d="M18.500,20 C21,21.500 24,21.500 26.800,20 L25.200,26.500 C22.500,28 19.500,28 17,26.500 Z" fill="#f6c02a"/></svg><svg class="a" style="left:58px;top:733px" width="9" height="32"><rect x="0" y="0" width="2" height="2" fill="#2a3646"/><rect x="1.5" y="1.5" width="1" height="1" fill="#c8d8ea" opacity=".7"/><rect x="3" y="0" width="2" height="2" fill="#2a3646"/><rect x="4.5" y="1.5" width="1" height="1" fill="#c8d8ea" opacity=".7"/><rect x="6" y="0" width="2" height="2" fill="#2a3646"/><rect x="7.5" y="1.5" width="1" height="1" fill="#c8d8ea" opacity=".7"/><rect x="0" y="4" width="2" height="2" fill="#2a3646"/><rect x="1.5" y="5.5" width="1" height="1" fill="#c8d8ea" opacity=".7"/><rect x="3" y="4" width="2" height="2" fill="#2a3646"/><rect x="4.5" y="5.5" width="1" height="1" fill="#c8d8ea" opacity=".7"/><rect x="6" y="4" width="2" height="2" fill="#2a3646"/><rect x="7.5" y="5.5" width="1" height="1" fill="#c8d8ea" opacity=".7"/><rect x="0" y="8" width="2" height="2" fill="#2a3646"/><rect x="1.5" y="9.5" width="1" height="1" fill="#c8d8ea" opacity=".7"/><rect x="3" y="8" width="2" height="2" fill="#2a3646"/><rect x="4.5" y="9.5" width="1" height="1" fill="#c8d8ea" opacity=".7"/><rect x="6" y="8" width="2" height="2" fill="#2a3646"/><rect x="7.5" y="9.5" width="1" height="1" fill="#c8d8ea" opacity=".7"/><rect x="0" y="12" width="2" height="2" fill="#2a3646"/><rect x="1.5" y="13.5" width="1" height="1" fill="#c8d8ea" opacity=".7"/><rect x="3" y="12" width="2" height="2" fill="#2a3646"/><rect x="4.5" y="13.5" width="1" height="1" fill="#c8d8ea" opacity=".7"/><rect x="6" y="12" width="2" height="2" fill="#2a3646"/><rect x="7.5" y="13.5" width="1" height="1" fill="#c8d8ea" opacity=".7"/><rect x="0" y="16" width="2" height="2" fill="#2a3646"/><rect x="1.5" y="17.5" width="1" height="1" fill="#c8d8ea" opacity=".7"/><rect x="3" y="16" width="2" height="2" fill="#2a3646"/><rect x="4.5" y="17.5" width="1" height="1" fill="#c8d8ea" opacity=".7"/><rect x="6" y="16" width="2" height="2" fill="#2a3646"/><rect x="7.5" y="17.5" width="1" height="1" fill="#c8d8ea" opacity=".7"/><rect x="0" y="20" width="2" height="2" fill="#2a3646"/><rect x="1.5" y="21.5" width="1" height="1" fill="#c8d8ea" opacity=".7"/><rect x="3" y="20" width="2" height="2" fill="#2a3646"/><rect x="4.5" y="21.5" width="1" height="1" fill="#c8d8ea" opacity=".7"/><rect x="6" y="20" width="2" height="2" fill="#2a3646"/><rect x="7.5" y="21.5" width="1" height="1" fill="#c8d8ea" opacity=".7"/><rect x="0" y="24" width="2" height="2" fill="#2a3646"/><rect x="1.5" y="25.5" width="1" height="1" fill="#c8d8ea" opacity=".7"/><rect x="3" y="24" width="2" height="2" fill="#2a3646"/><rect x="4.5" y="25.5" width="1" height="1" fill="#c8d8ea" opacity=".7"/><rect x="6" y="24" width="2" height="2" fill="#2a3646"/><rect x="7.5" y="25.5" width="1" height="1" fill="#c8d8ea" opacity=".7"/><rect x="0" y="28" width="2" height="2" fill="#2a3646"/><rect x="1.5" y="29.5" width="1" height="1" fill="#c8d8ea" opacity=".7"/><rect x="3" y="28" width="2" height="2" fill="#2a3646"/><rect x="4.5" y="29.5" width="1" height="1" fill="#c8d8ea" opacity=".7"/><rect x="6" y="28" width="2" height="2" fill="#2a3646"/><rect x="7.5" y="29.5" width="1" height="1" fill="#c8d8ea" opacity=".7"/></svg><svg class="a" style="left:89px;top:735px" width="32" height="29" viewBox="0 0 34 31"><path d="M2,4 L12,4 L13,2 L20,2 L21,4 L31,5 L31,26 L2,26 Z" fill="#f3d98a" stroke="#c9a84a" stroke-width="1"/><rect x="3" y="3" width="8" height="3" fill="#fff"/><rect x="4.5" y="3" width="3" height="2" fill="#3aa840"/><rect x="11" y="5" width="9" height="3" fill="#fff"/><rect x="12.500" y="5" width="3" height="2" fill="#d0402a"/><rect x="19" y="7" width="10" height="3" fill="#fff"/><rect x="20.500" y="7.300" width="3" height="2" fill="#3a90d0"/><path d="M2,10 L31,10 L31,26 L2,26 Z" fill="#f7e3a0" stroke="#d4b45a" stroke-width="1"/><path d="M6,29 L6,21 C6,19.500 7,19 8,19 L25,19 C26.500,19 27,20 27,21 L27,29 L22,29 L22,23.500 L11,23.500 L11,29 Z" fill="#8ccff0" stroke="#4aa0d0" stroke-width="1"/></svg><svg class="a" style="left:152px;top:736px" width="32" height="28" viewBox="0 0 32 28"><path d="M22,3 L27,4 L28,22 L30,24 L22,25 Z" fill="#b9d6ea" stroke="#8ab4d0" stroke-width=".6"/><rect x="1.500" y="1.500" width="22" height="23.500" fill="#a8d0ea" stroke="#6aa4cc" stroke-width="1"/><circle cx="12.500" cy="13" r="8.300" fill="#f08a24" stroke="#d86a10" stroke-width="1"/><path d="M9.800,8.500 L9.800,17.500 L17.500,13 Z" fill="#fff"/></svg><div class="a" style="left:199px;top:729px;width:60px;height:40px;border:1px solid #5a6c82;border-radius:3px;background:linear-gradient(180deg,rgba(255,255,255,.55) 0,rgba(255,255,255,.38) 45%,rgba(255,255,255,.22) 55%,rgba(255,255,255,.3) 100%);box-shadow:inset 0 0 0 1px rgba(255,255,255,.65)"></div><svg class="a" style="left:213px;top:731px" width="32" height="33" viewBox="0 0 32 33"><defs><linearGradient id="ffo" x1="0.85" y1="0.1" x2="0.2" y2="0.95"><stop offset="0" stop-color="#ffe840"/><stop offset="0.3" stop-color="#ffb01e"/><stop offset="0.6" stop-color="#ff6a22"/><stop offset="1" stop-color="#ee2a5a"/></linearGradient>
<radialGradient id="ffb" cx="0.55" cy="0.35" r="0.7"><stop offset="0" stop-color="#2a9af4"/><stop offset="0.55" stop-color="#2a50d8"/><stop offset="1" stop-color="#6a2ab4"/></radialGradient>
<linearGradient id="fff" x1="0.2" y1="0" x2="0.6" y2="1"><stop offset="0" stop-color="#ff9a1e"/><stop offset="0.5" stop-color="#ff5a24"/><stop offset="1" stop-color="#f0364a"/></linearGradient></defs><circle cx="16" cy="17.500" r="15" fill="url(#ffo)"/><circle cx="16" cy="16" r="8.500" fill="url(#ffb)"/><path d="M1.500,13 C2,9 3.500,6 5,4 C5.500,6 6.500,7 8,8 C10,6.500 13,6 15.500,7 C13.500,8 12.500,9.500 12.500,11 C14,11.500 16,12.500 16,14 C14,14 12,15 11.500,17 C12,20 15,21.500 18,21 C20.500,20.500 22,19 22.500,17.500 C23.500,21 21,25.500 16,26 C9,26.500 3.500,22 1.500,13 Z" fill="url(#fff)"/><path d="M17,1.500 C22,2.500 27,6 29.500,11 C30.500,13.500 31,16 30.800,18 C30,15 28,12.500 25.500,11.500 C25.500,8 22,4 17,1.500 Z" fill="#ffe23a"/></svg><div class="a" style="left:275px;top:732px;width:32px;height:32px;background:#fff"></div><svg class="a" style="left:275px;top:732px" width="32" height="32" viewBox="0 0 32 32"><circle cx="7.500" cy="8.500" r="3" fill="#8a8a8a"/><rect x="5.500" y="12.500" width="4.300" height="14" rx="1" fill="#8a8a8a"/><path d="M1.500,18 C2.500,13 5,11.500 8,11 C7,15.500 5,17.500 1.500,18 Z" fill="#a6d86a"/><rect x="8.500" y="0.800" width="23" height="30.400" rx="3.500" fill="#fff" stroke="#b4b4b4" stroke-width="1"/><text transform="translate(27.600,29.500) rotate(-90)" font-family="Liberation Sans,sans-serif" font-weight="bold" font-size="20" fill="#c4141a" stroke="#c4141a" stroke-width=".4" textLength="27" lengthAdjust="spacingAndGlyphs">DAQ</text><rect x="4.500" y="12" width="5.500" height="15" rx="1" fill="#8a8a8a"/><circle cx="7.300" cy="8.300" r="3.100" fill="#8a8a8a"/><path d="M1.500,18 C2.500,13 5,11.500 8,11 C7,15.500 5,17.500 1.500,18 Z" fill="#a6d86a"/></svg><div class="a" style="left:371px;top:729px;width:12px;height:40px;border:1px solid #5a6c82;border-left:none;border-radius:0 3px 3px 0;background:rgba(255,255,255,.35);box-shadow:inset -1px 0 0 rgba(255,255,255,.6)"></div><div class="a" style="left:371px;top:729px;width:8px;height:40px;border:1px solid #5a6c82;border-left:none;border-radius:0 3px 3px 0;background:rgba(255,255,255,.35);box-shadow:inset -1px 0 0 rgba(255,255,255,.6)"></div><div class="a" style="left:323px;top:729px;width:52px;height:40px;border:1px solid #5a6c82;border-radius:3px;background:linear-gradient(180deg,rgba(255,255,255,.55) 0,rgba(255,255,255,.38) 45%,rgba(255,255,255,.22) 55%,rgba(255,255,255,.3) 100%);box-shadow:inset 0 0 0 1px rgba(255,255,255,.65)"></div><div class="a" style="left:324px;top:730px;width:50px;height:38px;background:linear-gradient(135deg,rgba(240,245,252,.75) 0,rgba(225,235,247,.55) 55%,rgba(235,242,250,.7) 100%)"></div><svg class="a" style="left:334px;top:734px;" width="30" height="28.5" viewBox="0 0 16 15"><defs><linearGradient id="vg" x1="0" y1="0" x2="0" y2="1"><stop offset="0" stop-color="#e27878"/><stop offset=".4" stop-color="#cf2024"/><stop offset="1" stop-color="#b40000"/></linearGradient></defs><path d="M0,0.4 L4.400,0.400 L8,10.400 L10.700,0.150 L16,0.150 L15.700,2.700 L12.500,2.700 L7.700,15 L6.500,15 Z" fill="url(#vg)"/></svg><svg class="a" style="left:1108px;top:733px" width="9" height="32"><rect x="0" y="0" width="2" height="2" fill="#2e3c50"/><rect x="1.5" y="1.5" width="1" height="1" fill="#c8d8ea" opacity=".7"/><rect x="3" y="0" width="2" height="2" fill="#2e3c50"/><rect x="4.5" y="1.5" width="1" height="1" fill="#c8d8ea" opacity=".7"/><rect x="6" y="0" width="2" height="2" fill="#2e3c50"/><rect x="7.5" y="1.5" width="1" height="1" fill="#c8d8ea" opacity=".7"/><rect x="0" y="4" width="2" height="2" fill="#2e3c50"/><rect x="1.5" y="5.5" width="1" height="1" fill="#c8d8ea" opacity=".7"/><rect x="3" y="4" width="2" height="2" fill="#2e3c50"/><rect x="4.5" y="5.5" width="1" height="1" fill="#c8d8ea" opacity=".7"/><rect x="6" y="4" width="2" height="2" fill="#2e3c50"/><rect x="7.5" y="5.5" width="1" height="1" fill="#c8d8ea" opacity=".7"/><rect x="0" y="8" width="2" height="2" fill="#2e3c50"/><rect x="1.5" y="9.5" width="1" height="1" fill="#c8d8ea" opacity=".7"/><rect x="3" y="8" width="2" height="2" fill="#2e3c50"/><rect x="4.5" y="9.5" width="1" height="1" fill="#c8d8ea" opacity=".7"/><rect x="6" y="8" width="2" height="2" fill="#2e3c50"/><rect x="7.5" y="9.5" width="1" height="1" fill="#c8d8ea" opacity=".7"/><rect x="0" y="12" width="2" height="2" fill="#2e3c50"/><rect x="1.5" y="13.5" width="1" height="1" fill="#c8d8ea" opacity=".7"/><rect x="3" y="12" width="2" height="2" fill="#2e3c50"/><rect x="4.5" y="13.5" width="1" height="1" fill="#c8d8ea" opacity=".7"/><rect x="6" y="12" width="2" height="2" fill="#2e3c50"/><rect x="7.5" y="13.5" width="1" height="1" fill="#c8d8ea" opacity=".7"/><rect x="0" y="16" width="2" height="2" fill="#2e3c50"/><rect x="1.5" y="17.5" width="1" height="1" fill="#c8d8ea" opacity=".7"/><rect x="3" y="16" width="2" height="2" fill="#2e3c50"/><rect x="4.5" y="17.5" width="1" height="1" fill="#c8d8ea" opacity=".7"/><rect x="6" y="16" width="2" height="2" fill="#2e3c50"/><rect x="7.5" y="17.5" width="1" height="1" fill="#c8d8ea" opacity=".7"/><rect x="0" y="20" width="2" height="2" fill="#2e3c50"/><rect x="1.5" y="21.5" width="1" height="1" fill="#c8d8ea" opacity=".7"/><rect x="3" y="20" width="2" height="2" fill="#2e3c50"/><rect x="4.5" y="21.5" width="1" height="1" fill="#c8d8ea" opacity=".7"/><rect x="6" y="20" width="2" height="2" fill="#2e3c50"/><rect x="7.5" y="21.5" width="1" height="1" fill="#c8d8ea" opacity=".7"/><rect x="0" y="24" width="2" height="2" fill="#2e3c50"/><rect x="1.5" y="25.5" width="1" height="1" fill="#c8d8ea" opacity=".7"/><rect x="3" y="24" width="2" height="2" fill="#2e3c50"/><rect x="4.5" y="25.5" width="1" height="1" fill="#c8d8ea" opacity=".7"/><rect x="6" y="24" width="2" height="2" fill="#2e3c50"/><rect x="7.5" y="25.5" width="1" height="1" fill="#c8d8ea" opacity=".7"/><rect x="0" y="28" width="2" height="2" fill="#2e3c50"/><rect x="1.5" y="29.5" width="1" height="1" fill="#c8d8ea" opacity=".7"/><rect x="3" y="28" width="2" height="2" fill="#2e3c50"/><rect x="4.5" y="29.5" width="1" height="1" fill="#c8d8ea" opacity=".7"/><rect x="6" y="28" width="2" height="2" fill="#2e3c50"/><rect x="7.5" y="29.5" width="1" height="1" fill="#c8d8ea" opacity=".7"/></svg><div class="t" style="left:1125px;top:738px;font-size:11.500px;letter-spacing:-.6px;line-height:16px;height:16px;color:#fff">EN</div><svg class="a" style="left:1155px;top:745px" width="11" height="7"><path d="M1,6 L5.500,1.500 L10,6 Z" fill="#fff" stroke="#c8d4e0" stroke-width=".5"/></svg><svg class="a" style="left:1178px;top:739px" width="16" height="18" viewBox="0 0 16 18"><path d="M1.500,6.500 L4,6.500 L8,2 L8,16 L4,11.500 L1.500,11.500 Z" fill="#fff" stroke="#445" stroke-width=".8"/><path d="M10.500,5 C12.500,7 12.500,11 10.500,13" fill="none" stroke="#fff" stroke-width="1.300"/></svg><svg class="a" style="left:1200px;top:740px" width="18" height="17" viewBox="0 0 18 17"><path d="M1.500,1 L1.500,16" stroke="#fff" stroke-width="1.800"/><path d="M1,1 L3,1" stroke="#334" stroke-width=".5"/><path d="M3.500,2.300 C7,0.800 9,4 16.500,2.800 C15,5 15,6 13,8.500 C9,9.500 7,7 3.500,8.500 Z" fill="#fff" stroke="#445" stroke-width=".8"/></svg><svg class="a" style="left:1224px;top:739px" width="18" height="19" viewBox="0 0 18 19"><rect x="1.500" y="3.500" width="8" height="13" rx="1.500" fill="#fff" stroke="#334" stroke-width="1"/><rect x="4" y="1.500" width="3" height="2" fill="#fff" stroke="#334" stroke-width=".6"/><path d="M8,6 L15,6 L15,10 C15,12 13,13 11.500,13 L11.500,17 L10,17 L10,13 C8.500,13 7,12 7,10 Z" fill="#fff" stroke="#334" stroke-width="1"/><path d="M9.500,2.500 L9.500,6 M13,2.500 L13,6" stroke="#fff" stroke-width="1.600"/></svg><svg class="a" style="left:1248px;top:741px" width="18" height="15" viewBox="0 0 18 15"><g fill="#fff" stroke="#334" stroke-width=".7"><rect x="1" y="10.500" width="2.500" height="3"/><rect x="4.500" y="8.500" width="2.500" height="5"/><rect x="8" y="6" width="2.500" height="7.500"/><rect x="11.500" y="3.500" width="2.500" height="10"/><rect x="15" y="1" width="2.500" height="12.500"/></g></svg><div class="t" style="left:1271px;width:80px;text-align:center;top:733px;font-size:12px;line-height:16px;height:16px;color:#fff">3:06 PM</div><div class="t" style="left:1271px;width:80px;text-align:center;top:750px;font-size:12px;line-height:16px;height:16px;color:#fff">21-Oct-18</div><div class="a" style="left:1352px;top:729px;width:14px;height:39px;border-left:1px solid #4a5a70;background:linear-gradient(180deg,#b4c8de 0,#8aa6c4 45%,#6f8cae 55%,#7f9cbc 100%);box-shadow:inset 1px 0 0 rgba(255,255,255,.5)"></div></div></body></html>
